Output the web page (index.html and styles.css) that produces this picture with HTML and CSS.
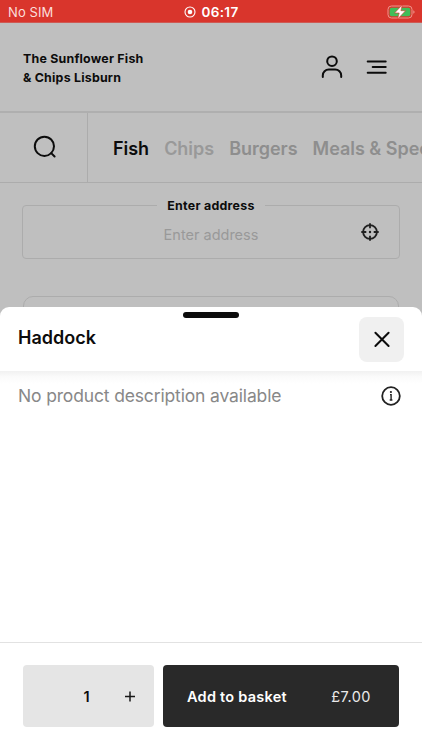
FILE: index.html
```html
<!DOCTYPE html>
<html lang="en">
<head>
<meta charset="utf-8">
<title>The Sunflower Fish &amp; Chips Lisburn</title>
<link rel="stylesheet" href="styles.css">
</head>
<body>
<div class="screen">
  <div class="status">
    <span class="carrier">No SIM</span>
    <span class="clock">
      <svg width="12" height="12" viewBox="0 0 12 12"><circle cx="6" cy="6" r="5" fill="none" stroke="#fff" stroke-width="1.1"/><circle cx="6" cy="6" r="2.3" fill="#fff"/></svg>
      <span>06:17</span>
    </span>
    <svg class="battery" width="28" height="16" viewBox="0 0 28 16"><rect x="1" y="2" width="24" height="12" rx="3.4" fill="none" stroke="#ee958b" stroke-width="1"/><rect x="2.7" y="3.7" width="20.6" height="8.6" rx="2" fill="#40bd58"/><path d="M26.3 6.2v3.6q1.3-.5 1.3-1.8t-1.3-1.8z" fill="#ee958b"/><path d="M15.2.9 7.6 9h4.6L10.6 15.1l8-8.4h-4.7z" fill="#fff" stroke="#d9352c" stroke-width=".6"/></svg>
  </div>
  <header class="header">
    <h1 class="brand">The Sunflower Fish<br>&amp; Chips Lisburn</h1>
    <div class="actions">
      <svg width="22" height="24" viewBox="0 0 22 24" class="line-icon"><circle cx="11" cy="6.2" r="4.8"/><path d="M1.8 22v-1.5a6 6 0 0 1 6-6h6.4a6 6 0 0 1 6 6V22"/></svg>
      <svg width="22" height="16" viewBox="0 0 22 16" class="line-icon"><path d="M1.7 2.4h18M6.7 8.1h13M1.7 13.7h18"/></svg>
    </div>
  </header>
  <nav class="nav">
    <div class="search"><svg width="24" height="24" viewBox="0 0 24 24" class="line-icon"><circle cx="11.4" cy="11.3" r="9.6"/><path d="m18.2 18.1 3.4 3.4"/></svg></div>
    <div class="tabs"><span class="tab active">Fish</span><span class="tab chips">Chips</span><span class="tab">Burgers</span><span class="tab">Meals &amp; Specials</span></div>
  </nav>
  <main class="content">
    <fieldset class="address">
      <legend>Enter address</legend>
      <span class="placeholder">Enter address</span>
      <svg class="locate" width="20" height="20" viewBox="0 0 20 20"><g fill="none" stroke="#202020" stroke-width="1.8"><circle cx="10" cy="10" r="6.9"/><path d="M10 1.3v5M10 13.7v5M1.3 10h5M13.7 10h5"/></g><circle cx="10" cy="10" r="1.2" fill="#202020"/></svg>
    </fieldset>
    <div class="card"></div>
  </main>
  <section class="sheet">
    <div class="handle"></div>
    <div class="sheet-head">
      <h2>Haddock</h2>
      <div class="close"><svg width="18" height="18" viewBox="0 0 18 18" class="line-icon"><path d="m2.4 2.8 13.2 13.2M15.6 2.8 2.4 16"/></svg></div>
    </div>
    <div class="sheet-body">
      <p>No product description available</p>
      <svg width="20" height="20" viewBox="0 0 20 20"><circle cx="10" cy="10" r="8.8" fill="none" stroke="#222" stroke-width="1.8"/><circle cx="9.9" cy="6" r="1.1" fill="#222"/><path d="M9 8.6h1.1v5.2M8.7 14h2.7" fill="none" stroke="#222" stroke-width="1.4"/></svg>
    </div>
    <footer class="sheet-foot">
      <div class="qty"><span></span><span class="count">1</span><svg width="12" height="12" viewBox="0 0 12 12"><path d="M6 1.5v10M1 6.5h10" stroke="#181818" stroke-width="1.5"/></svg></div>
      <div class="add"><span class="add-label">Add to basket</span><span class="price">£7.00</span></div>
    </footer>
  </section>
</div>
</body>
</html>
```
FILE: styles.css
```css
* { box-sizing: border-box; }
body { margin: 0; font-family: Inter, "Liberation Sans", sans-serif; color: #0c0c0c; }
svg { display: block; flex: none; }
h1, h2, p { margin: 0; }
.screen { position: relative; width: 422px; height: 750px; overflow: hidden; background: #bfbfbf; }
.line-icon { fill: none; stroke: #0c0c0c; stroke-width: 2; stroke-linecap: round; stroke-linejoin: round; }

.status { display: grid; grid-template-columns: 1fr auto 1fr; align-items: center; height: 23px; padding: 1px 7px 0 8px; background: #d9352c; color: #fff; border-bottom: 1px solid #ce5a54; }
.carrier { font-size: 13px; letter-spacing: .1px; color: #fbdedb; }
.clock { display: flex; align-items: center; gap: 5px; font-size: 13.5px; font-weight: 600; letter-spacing: .35px; }
.battery { justify-self: end; }

.header { display: flex; justify-content: space-between; align-items: center; height: 90px; padding: 0 34px 0 23px; border-bottom: 2px solid #afafaf; }
.brand { padding-top: 1px; font-size: 12.4px; line-height: 19px; font-weight: 650; letter-spacing: .22px; }
.actions { display: flex; align-items: center; gap: 23px; }

.nav { display: flex; height: 70px; border-bottom: 1px solid #acacac; }
.search { display: flex; align-items: center; justify-content: center; width: 88px; padding: 0 0 1px 2px; border-right: 1px solid #acacac; }
.tabs { flex: 1; display: flex; align-items: center; gap: 15px; padding: 2px 0 0 25px; overflow: hidden; white-space: nowrap; font-size: 18px; font-weight: 600; letter-spacing: -.02px; color: #8e8e8e; }
.active { color: #0c0c0c; }
.chips { color: #999; }

.content { padding: 15px 22px 0; }
.address { position: relative; display: block; height: 61px; margin: 0; padding: 0; border: 1px solid #acacac; border-radius: 4px; text-align: center; }
.address legend { margin: 0 auto; padding: 0 10px; font-size: 12.4px; line-height: 15px; font-weight: 650; letter-spacing: .27px; }
.placeholder { display: block; margin-top: 13px; font-size: 14.5px; line-height: 18px; color: #999; }
.locate { position: absolute; right: 19px; top: 9px; }
.card { height: 80px; margin: 37px 1px 0; border: 1px solid #acacac; border-radius: 10px; }

.sheet { position: absolute; inset: 307px 0 0; display: flex; flex-direction: column; background: #fff; border-radius: 9px 9px 0 0; }
.handle { position: absolute; left: 183px; top: 5px; width: 56px; height: 6px; border-radius: 3px; background: #0c0c0c; }
.sheet-head { display: flex; align-items: center; justify-content: space-between; height: 64px; padding: 0 18px 0 18px; }
.sheet-head h2 { font-size: 18px; font-weight: 600; line-height: 22px; margin-top: -2px; }
.close { display: flex; align-items: center; justify-content: center; width: 45px; height: 45px; border-radius: 8px; background: #f0f0f0; }
.sheet-body { flex: 1; display: flex; justify-content: space-between; align-items: flex-start; padding: 15px 21px 0 18px; background: linear-gradient(#f1f1f1, #fbfbfb 6px, #fff 13px); }
.sheet-body p { font-size: 17.5px; line-height: 20px; letter-spacing: -.15px; color: #888; }
.sheet-foot { display: flex; gap: 9px; height: 108px; padding: 22px 23px; border-top: 1px solid #e2e2e2; }
.qty { display: grid; grid-template-columns: 43px 41px 45px; align-items: center; justify-items: center; width: 131px; height: 62px; border-radius: 4px; background: #e5e5e5; }
.count { font-size: 14.5px; font-weight: 600; }
.add { flex: 1; display: flex; align-items: center; justify-content: space-between; height: 62px; padding: 0 28px 0 24px; border-radius: 4px; background: #292929; color: #fff; font-size: 14.5px; }
.add-label { font-weight: 600; letter-spacing: .25px; }
.price { color: #eaeaea; letter-spacing: .5px; }
```
